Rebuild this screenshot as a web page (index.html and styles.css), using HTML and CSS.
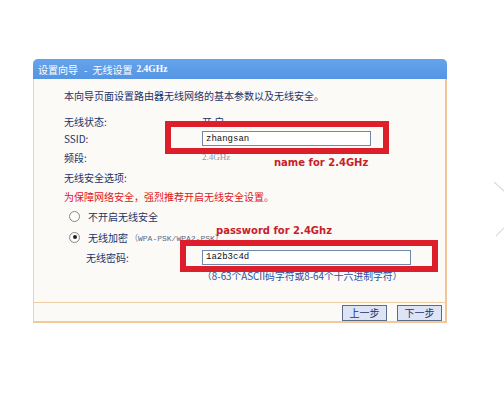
FILE: index.html
```html
<!DOCTYPE html>
<html lang="zh-CN">
<head>
<meta charset="utf-8">
<title>设置向导 - 无线设置 2.4GHz</title>
<link rel="stylesheet" href="styles.css">
</head>
<body>
<div class="page">
  <div class="panel">
    <div class="header"><span>设置向导</span><span class="dash">-</span><span>无线设置</span><span class="hdr-small">2.4GHz</span></div>
    <div class="content">
      <div class="row intro">本向导页面设置路由器无线网络的基本参数以及无线安全。</div>
      <div class="row r-status"><span class="label">无线状态:</span><span class="value">开 启</span></div>
      <div class="row r-ssid"><span class="label">SSID:</span><input class="field f-ssid" type="text" value="zhangsan"></div>
      <div class="row r-band"><span class="label">频段:</span><span class="value grey">2.4GHz</span></div>
      <div class="row r-sec"><span class="label">无线安全选项:</span></div>
      <div class="row r-warn">为保障网络安全，强烈推荐开启无线安全设置。</div>
      <div class="row r-radio1"><span class="radio"></span><span>不开启无线安全</span></div>
      <div class="row r-radio2"><span class="radio checked"></span><span>无线加密</span><span class="mode">（WPA-PSK/WPA2-PSK）</span></div>
      <div class="row r-pwd"><span class="label sub">无线密码:</span><input class="field f-pwd" type="text" value="1a2b3c4d"></div>
      <div class="row r-hint"><span class="hint">（8-63个ASCII码字符或8-64个十六进制字符）</span></div>
    </div>
    <div class="footer">
      <button class="btn">上一步</button>
      <button class="btn">下一步</button>
    </div>
    <div class="mark mark-ssid"></div>
    <div class="mark mark-pwd"></div>
    <div class="note note-name">name for 2.4GHz</div>
    <div class="note note-pwd">password for 2.4Ghz</div>
  </div>
  <svg class="deco" width="20" height="80" viewBox="0 0 20 80">
    <path d="M4 8 L15 18" stroke="#dcdcdc" stroke-width="1.2" fill="none"/>
    <path d="M6 62 L15 53" stroke="#dcdcdc" stroke-width="1.2" fill="none"/>
  </svg>
</div>
</body>
</html>
```

FILE: styles.css
```css
html, body {
  margin: 0;
  padding: 0;
  background: #ffffff;
}
body {
  font-family: "Noto Sans CJK SC", "Noto Sans", sans-serif;
  font-size: 10px;
  color: #1b3368;
}
.page {
  position: relative;
  width: 504px;
  height: 409px;
  padding: 59px 0 0 33px;
  box-sizing: border-box;
}
.panel {
  position: relative;
  width: 414px;
  box-sizing: border-box;
  background: #fcfaf7;
  border-left: 1px solid #f3cfa6;
  border-right: 2px solid #f2c496;
  border-bottom: 2px solid #f2c799;
  border-radius: 5px 5px 0 0;
}
.header {
  display: flex;
  align-items: center;
  height: 20px;
  margin: 0 -2px 0 -1px;
  background: linear-gradient(#66a3ec, #5595e4);
  border-radius: 5px 5px 0 0;
  color: #ffffff;
  padding-left: 5px;
  font-size: 10px;
  white-space: nowrap;
}
.dash {
  margin: 0 5px 0 6px;
}
.hdr-small {
  font-family: "Liberation Serif", serif;
  font-weight: bold;
  font-size: 9.5px;
  margin-left: 4px;
}
.content {
  padding: 9px 0 18px 30px;
}
.row {
  display: flex;
  align-items: center;
  height: 18px;
  white-space: nowrap;
}
.intro { height: 14px; }
.r-status { margin-top: 10px; }
.r-ssid { height: 17px; }
.r-band { margin-top: 1px; }
.r-sec { margin-top: 2px; }
.r-warn { margin-top: 1px; color: #e0141c; }
.r-radio1 { margin-top: 2px; }
.r-radio2 { margin-top: 3px; }
.r-pwd { margin-top: 2px; }
.r-hint { margin-top: 2px; height: 16px; }
.label {
  width: 138px;
  flex: none;
}
.label.sub {
  width: 116px;
  margin-left: 22px;
}
.grey {
  color: #8a96ad;
  font-family: "Liberation Serif", serif;
  font-size: 9px;
}
.field {
  box-sizing: border-box;
  height: 15px;
  border: 1px solid #6f8aa8;
  background: #ffffff;
  padding: 0 3px;
  margin: 0;
  font-family: "Liberation Mono", monospace;
  font-size: 9px;
  color: #111;
  outline: none;
}
.f-ssid { width: 169px; }
.f-pwd { width: 209px; }
.radio {
  width: 9px;
  height: 9px;
  margin: 0 8px 0 5px;
  border: 1px solid #8a8a8a;
  border-radius: 50%;
  background: radial-gradient(circle, #ffffff 50%, #e8e8e8);
  position: relative;
  flex: none;
}
.radio.checked::after {
  content: "";
  position: absolute;
  left: 2.5px;
  top: 2.5px;
  width: 4px;
  height: 4px;
  border-radius: 50%;
  background: #222;
}
.mode {
  font-family: "Liberation Mono", monospace;
  font-size: 8px;
  color: #5b6b88;
  margin-left: 2px;
}
.hint {
  margin-left: 138px;
  color: #2c4da0;
  font-size: 9.8px;
}
.footer {
  display: flex;
  justify-content: flex-end;
  gap: 10px;
  border-top: 1px solid #f0cca4;
  padding: 2px 3px 0 0;
  height: 19px;
  box-sizing: border-box;
}
.btn {
  height: 16px;
  width: 45px;
  padding: 0;
  margin: 0;
  border: 1px solid #5a6c8c;
  background: #dde4f6;
  color: #1b3368;
  font-family: "Noto Sans CJK SC", sans-serif;
  font-size: 10px;
  line-height: 14px;
}
.mark {
  position: absolute;
  border: 6px solid #dc1f2a;
  box-sizing: border-box;
}
.mark-ssid {
  left: 131px;
  top: 62px;
  width: 224px;
  height: 33px;
}
.mark-pwd {
  left: 146px;
  top: 181px;
  width: 258px;
  height: 32px;
}
.note {
  position: absolute;
  font-family: "DejaVu Sans", sans-serif;
  font-weight: bold;
  font-size: 10px;
  color: #c8202a;
  line-height: 12px;
  white-space: nowrap;
}
.note-name {
  left: 240px;
  top: 98px;
}
.note-pwd {
  left: 182px;
  top: 166px;
}
.deco {
  position: absolute;
  left: 490px;
  top: 174px;
}
```
